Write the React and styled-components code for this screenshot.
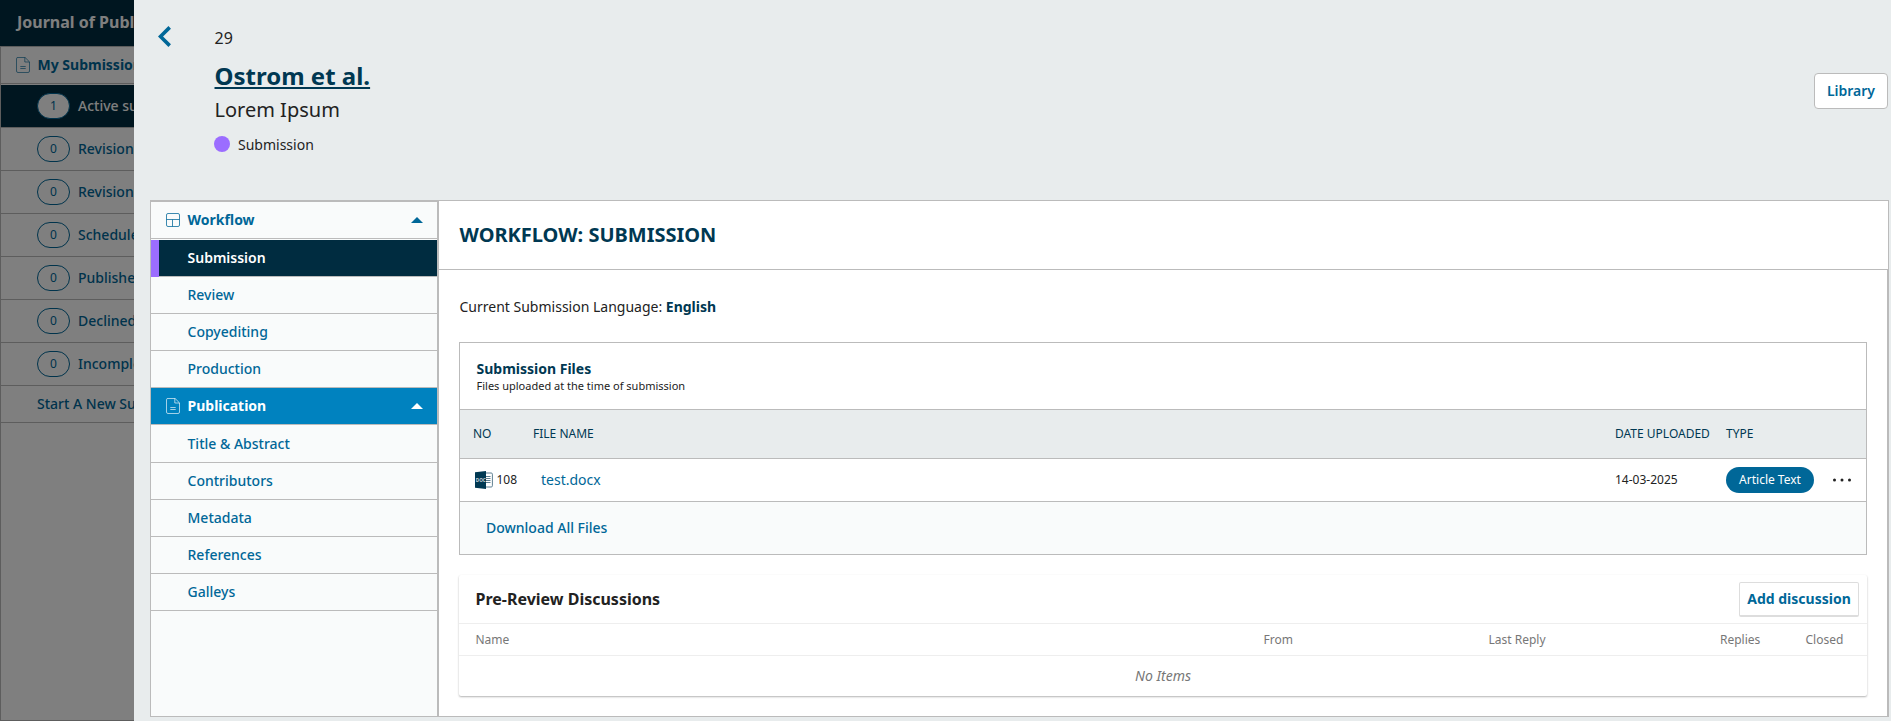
import React from "react";
import styled, { createGlobalStyle, css } from "styled-components";

const Global = createGlobalStyle`
  * { box-sizing: border-box; }
  body { margin: 0; overflow: hidden; }
  button { font: inherit; }
  h1, h2, h3, p { margin: 0; }
`;

const c = {
  primary: "#006798",
  dark: "#002c40",
  heading: "#003852",
  blue: "#0082bf",
  line: "#bbbbbb",
  panel: "#e8eced",
  soft: "#f9fbfb",
  text: "#222222",
  purple: "#9b6dff",
};

const Page = styled.div`
  position: relative;
  width: 100%;
  height: 721px;
  overflow: hidden;
  background: #fff;
  color: ${c.text};
  font: 14px/20px "Noto Sans", sans-serif;
`;

const Backdrop = styled.div`
  position: absolute;
  inset: 0;
  background: rgba(0, 0, 0, 0.5);
`;

const TopBar = styled.header`
  height: 46px;
  padding: 0 17px 2px;
  display: flex;
  align-items: center;
  background: ${c.dark};
  color: #fff;
  font-size: 16px;
  font-weight: 700;
`;

const SideNav = styled.nav`
  width: 289px;
  height: 675px;
  border: 1px solid ${c.line};
  background: #fff;
`;

const MenuHead = styled.div`
  display: flex;
  align-items: center;
  height: 37px;
  padding: 0 14px 0 15px;
  gap: 7.5px;
  border-bottom: 1px solid ${c.line};
  margin-bottom: ${(p) => (p.$gap ? "1px" : 0)};
  background: ${(p) => (p.$active ? c.blue : "transparent")};
  color: ${(p) => (p.$active ? "#fff" : c.primary)};
  font-weight: 700;
  white-space: nowrap;
  svg { flex: none; }
  span { flex: 1; }
`;

const SideItem = styled.div`
  display: flex;
  align-items: center;
  gap: 8px;
  height: ${(p) => (p.$plain ? "37px" : "43px")};
  padding-left: 36px;
  border-bottom: 1px solid ${c.line};
  font-weight: 500;
  white-space: nowrap;
  color: ${(p) => (p.$active ? "#fff" : c.primary)};
  background: ${(p) => (p.$active ? c.dark : "transparent")};
`;

const Count = styled.span`
  width: 33px;
  height: 26px;
  border: 1px solid ${c.primary};
  border-radius: 13px;
  background: #fff;
  color: ${c.primary};
  display: flex;
  align-items: center;
  justify-content: center;
  font-size: 12px;
  font-weight: 400;
`;

const Modal = styled.section`
  position: absolute;
  inset: 0 0 0 134px;
  display: flex;
  flex-direction: column;
  background: ${c.panel};
`;

const ModalHead = styled.header`
  display: flex;
  align-items: flex-start;
  height: 200px;
  padding-right: 3px;
`;

const BackButton = styled.button`
  width: 80px;
  padding: 26px 0 0 24px;
  border: 0;
  background: none;
  text-align: left;
  svg { display: block; }
`;

const Summary = styled.div`
  flex: 1;
  padding: 26px 0 0 0.5px;
`;

const SubmissionId = styled.div`
  font-size: 16px;
  line-height: 24px;
`;

const Authors = styled.h1`
  margin-top: 10px;
  font-size: 24px;
  line-height: 32px;
  color: ${c.heading};
  text-decoration: underline;
`;

const Title = styled.h2`
  margin-top: 3px;
  font-size: 20px;
  line-height: 30px;
  font-weight: 400;
`;

const Stage = styled.div`
  display: flex;
  align-items: center;
  gap: 8px;
  margin-top: 10px;
  &::before {
    content: "";
    width: 16px;
    height: 16px;
    border-radius: 50%;
    background: ${c.purple};
    margin: -2px 0 0 -0.5px;
  }
`;

const LibraryButton = styled.button`
  width: 74px;
  height: 36px;
  margin-top: 73px;
  padding: 0;
  border: 1px solid ${c.line};
  border-radius: 4px;
  background: #fff;
  color: ${c.primary};
  font-weight: 600;
`;

const Workspace = styled.div`
  display: flex;
  width: 1739px;
  height: 517px;
  margin-left: 16px;
  border: 1px solid ${c.line};
  background: #fff;
`;

const StageMenu = styled.nav`
  width: 288px;
  border: solid ${c.line};
  border-width: 1px 2px 0 0;
  background: ${c.soft};
`;

const StageItem = styled.div`
  height: 37px;
  padding: 0 0 1px 36.5px;
  display: flex;
  align-items: center;
  border-bottom: 1px solid ${c.line};
  color: ${c.primary};
  font-weight: 500;
  ${(p) =>
    p.$active &&
    css`
      position: relative;
      color: #fff;
      background: ${c.dark};
      font-weight: 600;
      &::before {
        content: "";
        position: absolute;
        left: 0;
        top: 0;
        bottom: -1px;
        width: 8px;
        background: ${c.purple};
      }
    `}
`;

const Content = styled.main`
  flex: 1;
  display: flex;
  flex-direction: column;
`;

const ContentHead = styled.h2`
  height: 69px;
  flex: none;
  padding: 0 20.5px;
  display: flex;
  align-items: center;
  border-bottom: 1px solid ${c.line};
  color: ${c.heading};
  font-size: 20px;
`;

const ContentBody = styled.div`
  flex: 1;
  padding: 27px 20px 0;
  border-right: 1px solid ${c.line};
`;

const Language = styled.p`
  padding-left: 0.5px;
  strong { color: ${c.heading}; }
`;

const Files = styled.section`
  margin-top: 25px;
  border: 1px solid ${c.line};
`;

const FilesHead = styled.div`
  height: 67px;
  padding: 16px 16.5px 0;
  border-bottom: 1px solid ${c.line};
  h3 {
    font-size: 14px;
    line-height: 20px;
    color: ${c.heading};
  }
  p {
    font-size: 11px;
    line-height: 14px;
  }
`;

const FileRow = styled.div`
  display: grid;
  grid-template-columns: 60px 1fr 111px 140px;
  align-items: center;
  height: ${(p) => (p.$head ? "49px" : "43px")};
  padding-left: 13px;
  border-bottom: 1px solid ${c.line};
  background: ${(p) => (p.$head ? c.panel : "transparent")};
  color: ${(p) => (p.$head ? c.heading : c.text)};
  font-size: 12px;
`;

const FileNumber = styled.span`
  display: flex;
  align-items: center;
  gap: 3.5px;
  padding-left: 2px;
`;

const FileLink = styled.a`
  padding-left: 8px;
  font-size: 14px;
  color: ${c.primary};
`;

const TypeCell = styled.span`
  display: flex;
  align-items: center;
  gap: 18px;
`;

const Tag = styled.span`
  width: 88px;
  height: 26px;
  border-radius: 13px;
  background: ${c.primary};
  color: #fff;
  display: flex;
  align-items: center;
  justify-content: center;
`;

const FilesFoot = styled.div`
  height: 52px;
  padding: 0 26px;
  display: flex;
  align-items: center;
  background: ${c.soft};
  color: ${c.primary};
  font-weight: 500;
`;

const Discussions = styled.section`
  height: 121px;
  margin-top: 20px;
  border-radius: 2px;
  background: #fff;
  box-shadow: 0 1px 2px rgba(0, 0, 0, 0.3);
`;

const DiscussionsHead = styled.div`
  display: flex;
  align-items: center;
  justify-content: space-between;
  height: 49px;
  padding: 0 8px 0 16.5px;
  border-bottom: 1px solid #eee;
  h3 {
    font-size: 16px;
  }
`;

const AddButton = styled.button`
  width: 120px;
  height: 35px;
  padding: 0;
  border: 1px solid #ddd;
  border-bottom-width: 2px;
  border-radius: 2px;
  background: #fff;
  color: ${c.primary};
  font-weight: 700;
  white-space: nowrap;
`;

const DiscussionColumns = styled.div`
  display: grid;
  grid-template-columns: 788px 225px 231.5px 85.5px 1fr;
  align-items: center;
  height: 32px;
  padding-left: 16.5px;
  border-bottom: 1px solid #eee;
  color: #777;
  font-size: 12px;
`;

const Empty = styled.p`
  height: 40px;
  line-height: 39px;
  text-align: center;
  font-style: italic;
  color: #777;
`;

const PageIcon = () => (
  <svg width="14" height="16" viewBox="0 0 14 16" fill="none" stroke="currentColor" strokeWidth="0.8" strokeOpacity="0.8">
    <path d="M1.5.5h7.6l4.4 4.4v9.1a1.5 1.5 0 0 1-1.5 1.5H2A1.5 1.5 0 0 1 .5 14V1.8A1.3 1.3 0 0 1 1.8.5M8.8.5V5h4.7M4.3 9.5h5.4M4.3 11.5h5.4" />
  </svg>
);

const WorkflowIcon = () => (
  <svg width="14" height="14" viewBox="0 0 14 14" fill="none" stroke="currentColor" strokeWidth="0.9" strokeOpacity="0.85">
    <rect x=".5" y=".5" width="13" height="13" rx="1.5" />
    <path d="M.5 6.5h13M6.5 6.5v7" />
  </svg>
);

const Caret = () => (
  <svg width="12" height="6" viewBox="0 0 12 6" fill="currentColor">
    <path d="M0 6 6 0l6 6z" />
  </svg>
);

const DocIcon = () => (
  <svg width="18" height="18" viewBox="0 0 18 18">
    <path d="M10 2h6.2a1.2 1.2 0 0 1 1.2 1.2v11.6a1.2 1.2 0 0 1-1.2 1.2H10M11 5.5h4.5M11 7.5h4.5M11 9.5h4.5M11 11.5h4.5" fill="none" stroke="#5d7f91" strokeWidth="1" />
    <path d="M0 1.3 11 0v18L0 16.7z" fill={c.heading} />
    <text x="0.8" y="10.7" fontSize="4.6" fontWeight="700" fill="#c6d2d9">DOC</text>
  </svg>
);

const views = [
  ["Active submissions", 1],
  ["Revisions requested", 0],
  ["Revisions submitted", 0],
  ["Scheduled for publication", 0],
  ["Published", 0],
  ["Declined", 0],
  ["Incomplete submissions", 0],
];

const stages = ["Submission", "Review", "Copyediting", "Production"];
const publication = ["Title & Abstract", "Contributors", "Metadata", "References", "Galleys"];

export default function App() {
  return (
    <Page>
      <Global />
      <TopBar>Journal of Public Knowledge</TopBar>
      <SideNav>
        <MenuHead $gap>
          <PageIcon />
          <span>My Submissions</span>
        </MenuHead>
        {views.map(([name, count], i) => (
          <SideItem key={name} $active={i === 0}>
            <Count>{count}</Count>
            {name}
          </SideItem>
        ))}
        <SideItem $plain>Start A New Submission</SideItem>
      </SideNav>
      <Backdrop />

      <Modal>
        <ModalHead>
          <BackButton aria-label="Back">
            <svg width="13" height="21" viewBox="0 0 13 21" fill="none" stroke={c.primary} strokeWidth="3.6">
              <path d="M11.7 1.4 2.5 10.5l9.2 9.1" />
            </svg>
          </BackButton>
          <Summary>
            <SubmissionId>29</SubmissionId>
            <Authors>Ostrom et al.</Authors>
            <Title>Lorem Ipsum</Title>
            <Stage>Submission</Stage>
          </Summary>
          <LibraryButton>Library</LibraryButton>
        </ModalHead>

        <Workspace>
          <StageMenu>
            <MenuHead $gap>
              <WorkflowIcon />
              <span>Workflow</span>
              <Caret />
            </MenuHead>
            {stages.map((name, i) => (
              <StageItem key={name} $active={i === 0}>{name}</StageItem>
            ))}
            <MenuHead $active $gap>
              <PageIcon />
              <span>Publication</span>
              <Caret />
            </MenuHead>
            {publication.map((name) => (
              <StageItem key={name}>{name}</StageItem>
            ))}
          </StageMenu>

          <Content>
            <ContentHead>WORKFLOW: SUBMISSION</ContentHead>
            <ContentBody>
              <Language>
                Current Submission Language: <strong>English</strong>
              </Language>

              <Files>
                <FilesHead>
                  <h3>Submission Files</h3>
                  <p>Files uploaded at the time of submission</p>
                </FilesHead>
                <FileRow $head>
                  <span>NO</span>
                  <span>FILE NAME</span>
                  <span>DATE UPLOADED</span>
                  <span>TYPE</span>
                </FileRow>
                <FileRow>
                  <FileNumber><DocIcon />108</FileNumber>
                  <FileLink>test.docx</FileLink>
                  <span>14-03-2025</span>
                  <TypeCell>
                    <Tag>Article Text</Tag>
                    <svg width="20" height="4" viewBox="0 0 20 4" fill={c.text}>
                      <circle cx="2.5" cy="2" r="1.5" />
                      <circle cx="10" cy="2" r="1.5" />
                      <circle cx="17.5" cy="2" r="1.5" />
                    </svg>
                  </TypeCell>
                </FileRow>
                <FilesFoot>Download All Files</FilesFoot>
              </Files>

              <Discussions>
                <DiscussionsHead>
                  <h3>Pre-Review Discussions</h3>
                  <AddButton>Add discussion</AddButton>
                </DiscussionsHead>
                <DiscussionColumns>
                  <span>Name</span>
                  <span>From</span>
                  <span>Last Reply</span>
                  <span>Replies</span>
                  <span>Closed</span>
                </DiscussionColumns>
                <Empty>No Items</Empty>
              </Discussions>
            </ContentBody>
          </Content>
        </Workspace>
      </Modal>
    </Page>
  );
}
